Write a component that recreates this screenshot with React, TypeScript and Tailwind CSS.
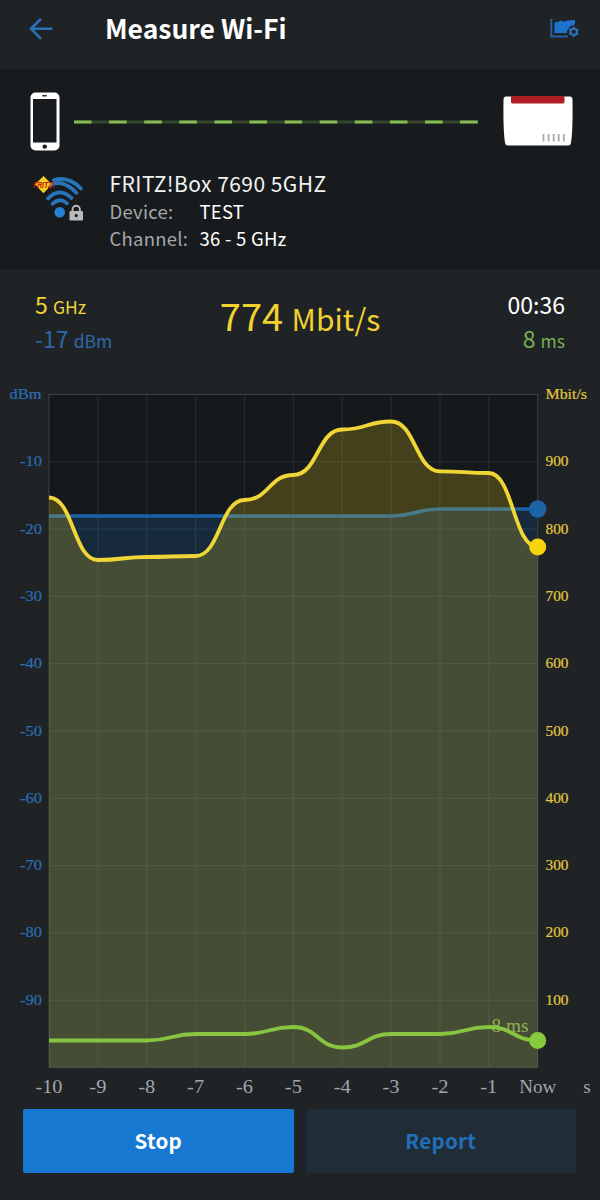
const X0 = 49;
const STEP = 48.87;
const TOP = 394.5;
const BOTTOM = 1067.5;
const ROW = 67.3;

const throughput = [497.5, 560, 557, 556, 500, 475, 429.5, 421.5, 471.3, 473, 547];
const signal = [516, 516, 516, 516, 516, 516, 516, 516, 509, 509, 509];
const latency = [1040.5, 1040.5, 1040.5, 1034, 1034, 1027, 1047.5, 1034, 1034, 1027, 1040.5];

function curve(values: number[]) {
  return values
    .map((y, i) => {
      const x = X0 + i * STEP;
      if (i === 0) return `M${x} ${y}`;
      const mid = x - STEP / 2;
      return `C${mid} ${values[i - 1]} ${mid} ${y} ${x} ${y}`;
    })
    .join(" ");
}

const area = (values: number[]) => `${curve(values)} V${BOTTOM} H${X0} Z`;

function Chart() {
  const xLabels = ["-10", "-9", "-8", "-7", "-6", "-5", "-4", "-3", "-2", "-1", "Now"];
  const right = X0 + STEP * 10;
  return (
    <svg viewBox="0 380 600 725" className="block h-[725px] w-[600px] shrink-0 font-['Liberation_Serif',serif]">
      <rect x={X0} y={TOP} width={right - X0} height={BOTTOM - TOP} fill="#16191c" />
      <g stroke="#2b2f32" strokeWidth="1">
        {Array.from({ length: 9 }, (_, i) => (
          <line key={`h${i}`} x1={X0} x2={right} y1={TOP + ROW * (i + 1)} y2={TOP + ROW * (i + 1)} />
        ))}
        {Array.from({ length: 9 }, (_, i) => (
          <line key={`v${i}`} y1={TOP} y2={BOTTOM} x1={X0 + STEP * (i + 1)} x2={X0 + STEP * (i + 1)} />
        ))}
      </g>
      <rect x={X0} y={TOP} width={right - X0} height={BOTTOM - TOP} fill="none" stroke="#3d4144" />
      <path d={area(signal)} fill="#1778d2" fillOpacity=".18" />
      <path d={curve(signal)} fill="none" stroke="#1b62a6" strokeWidth="3.6" />
      <path d={area(throughput)} fill="#f5d41a" fillOpacity=".21" />
      <path d={curve(throughput)} fill="none" stroke="#f0d537" strokeWidth="3.8" />
      <text x="491.5" y="1032" fontSize="19" textLength="37" lengthAdjust="spacingAndGlyphs" fill="#8fae55">8 ms</text>
      <path d={curve(latency)} fill="none" stroke="#87c540" strokeWidth="3.8" />
      <circle cx={right} cy="509" r="8.7" fill="#1c63a8" />
      <circle cx={right} cy="547" r="8.5" fill="#f8d40b" />
      <circle cx={right} cy="1040.5" r="8.5" fill="#85cb3d" />

      <g fontSize="15.5" fill="#2a6fb5" stroke="#2a6fb5" strokeWidth=".2">
        <text x="9.5" y="399" textLength="32" lengthAdjust="spacingAndGlyphs">dBm</text>
        {[10, 20, 30, 40, 50, 60, 70, 80, 90].map((n, i) => (
          <text key={n} x="20" y={TOP + ROW * (i + 1) + 4.5} textLength="22" lengthAdjust="spacingAndGlyphs">-{n}</text>
        ))}
      </g>
      <g fontSize="15.5" fill="#e3c73f" stroke="#e3c73f" strokeWidth=".2">
        <text x="545.5" y="399" textLength="41.5" lengthAdjust="spacingAndGlyphs">Mbit/s</text>
        {[900, 800, 700, 600, 500, 400, 300, 200, 100].map((n, i) => (
          <text key={n} x="545.5" y={TOP + ROW * (i + 1) + 4.5} textLength="23" lengthAdjust="spacingAndGlyphs">{n}</text>
        ))}
      </g>
      <g fontSize="19" fill="#a3a5a7" textAnchor="middle">
        {xLabels.map((l, i) => (
          <text
            key={l}
            x={X0 + STEP * i}
            y="1092.5"
            textLength={l === "Now" ? 37 : l === "-10" ? 27 : 17}
            lengthAdjust="spacingAndGlyphs"
          >
            {l}
          </text>
        ))}
        <text x="587" y="1092.5">s</text>
      </g>
    </svg>
  );
}

function Phone() {
  return (
    <svg viewBox="0 0 30 59" className="h-[59px] w-[30px] shrink-0">
      <rect x="0.5" y="0.5" width="29" height="58" rx="5" fill="#fff" />
      <rect x="3" y="7" width="23.5" height="43.5" fill="#171b1e" />
      <rect x="12" y="3" width="5" height="1.6" rx=".8" fill="#333" />
      <circle cx="14.8" cy="54.6" r="2.2" fill="#171b1e" />
    </svg>
  );
}

function Router() {
  return (
    <svg viewBox="0 0 70 50" className="h-[50px] w-[70px] shrink-0">
      <path d="M3 0.5H67Q69.5 .5 69.5 4Q70 34 68 47Q67.600 49.500 65 49.500H5Q2.400 49.500 2 47Q0 34 .5 4Q.5 .5 3 .5Z" fill="#fff" />
      <path d="M8 0H61.500V6Q61.500 7.500 60 7.500H9.500Q8 7.500 8 6Z" fill="#b01e26" />
      <path d="M40.500 38V45.500M45.600 38V45.500M50.700 38V45.500M55.700 38V45.500M60.800 38V45.500" stroke="#a9a9a9" strokeWidth="1.8" />
    </svg>
  );
}

function WifiBadge() {
  return (
    <svg viewBox="32 186 54 52" className="h-[52px] w-[54px] shrink-0">
      <g fill="none" stroke="#2874b8" strokeWidth="3.8" strokeLinecap="round">
        <path d="M54 193Q69 189 80.800 201.500" />
        <path d="M43 202.500Q60 188 76.300 205.800" />
        <path d="M48 211.500Q59.500 199.500 71.500 211" />
        <path d="M52.500 216.800Q60 210 67 216.300" />
      </g>
      <circle cx="59.700" cy="225.200" r="5.300" fill="#2780d4" />
      <path d="M43.500 189L52 197.600L43.500 206.300L35 197.600Z" fill="#f6cf18" />
      <text x="33" y="201.200" fontSize="9.500" textLength="21.500" lengthAdjust="spacingAndGlyphs" fill="#c8101a" className="font-['Liberation_Sans',sans-serif] font-bold italic">FRITZ!</text>
      <rect x="69.500" y="224" width="13.500" height="9.500" rx="1" fill="#b9babb" />
      <path d="M72.500 225V222.500A3.700 3.700 0 0 1 79.900 222.500V225" fill="none" stroke="#b9babb" strokeWidth="1.900" />
      <circle cx="76.200" cy="228.600" r="1.600" fill="#171b1e" />
    </svg>
  );
}

function ChartSettings() {
  return (
    <svg viewBox="550 18 30 22" className="h-[22px] w-[30px]">
      <path d="M551.300 19V36.400H568" fill="none" stroke="#2262a3" strokeWidth="2" />
      <path d="M554.500 22.500L558 22L561 20.500L564 21.800L567 20.500L575 20V24.500L570 26.500L567 31V33H554.500Z" fill="#1d73cc" />
      <circle cx="573.700" cy="31.800" r="5.600" fill="#202326" />
      <circle cx="573.700" cy="31.800" r="3.200" fill="none" stroke="#2f70b3" strokeWidth="2.200" />
      <path
        d="M573.700 26.600V29M573.700 34.600V37M569.200 29.200L571.300 30.400M576.100 33.200L578.200 34.400M569.200 34.400L571.300 33.200M576.100 30.400L578.200 29.200"
        stroke="#2f70b3"
        strokeWidth="2"
      />
    </svg>
  );
}

export default function App() {
  return (
    <div className="flex h-[1200px] w-[600px] flex-col overflow-hidden bg-[#202326] font-['Noto_Sans_CJK_SC',sans-serif] text-white">
      <header className="flex h-[69px] shrink-0 items-start pl-[29px] pr-[20px]">
        <svg viewBox="0 0 24 22" className="mt-[18px] h-[22px] w-6" fill="none" stroke="#2a72b8" strokeWidth="2.600">
          <path d="M23.500 10.800H2M12 .8L2 10.800L12 20.800" />
        </svg>
        <h1 className="ml-[52px] mt-[8px] whitespace-nowrap text-[26.500px] font-bold leading-[40px]">Measure Wi-Fi</h1>
        <div className="ml-auto mt-[18px]">
          <ChartSettings />
        </div>
      </header>

      <section className="h-[200px] shrink-0 bg-[#171b1e] px-[30px] pt-[23px]">
        <div className="flex items-start">
          <Phone />
          <svg viewBox="0 0 404 4" className="ml-[14px] mt-[27.500px] h-1 w-[404px] shrink-0">
            <path d="M0 2H404" stroke="#34472c" strokeWidth="3" />
            <path d="M0 2H404" stroke="#85bb50" strokeWidth="3.200" strokeDasharray="17.600 17.500" />
          </svg>
          <div className="-mr-[3px] ml-[25px] mt-[4px] shrink-0">
            <Router />
          </div>
        </div>
        <div className="flex items-start pl-[2px] pt-[12px]">
          <div className="pt-[10px]">
            <WifiBadge />
          </div>
          <div className="ml-[23.500px] pt-[6px]">
            <div className="whitespace-nowrap text-[21px] leading-[29px] tracking-[0.450px] text-[#f2f2f2]">FRITZ!Box 7690 5GHZ</div>
            <div className="grid grid-cols-[90px_1fr] whitespace-nowrap text-[18.500px] leading-[27px] tracking-[0.250px]">
              <span className="text-[#a5a7a9]">Device:</span>
              <span>TEST</span>
              <span className="text-[#a5a7a9]">Channel:</span>
              <span>36 - 5 GHz</span>
            </div>
          </div>
        </div>
      </section>

      <section className="flex h-[111px] shrink-0 justify-between px-[35px] pt-[18px] leading-[34px]">
        <div className="w-[110px] whitespace-nowrap text-[23px]">
          <div className="text-[#f0d537]">5 <span className="text-[17.500px] leading-none">GHz</span></div>
          <div className="text-[#2c68ab]">-17 <span className="text-[17.500px] leading-none">dBm</span></div>
        </div>
        <div className="whitespace-nowrap text-[38px] leading-[56px] text-[#f0d130]">
          774 <span className="text-[30px] leading-none">Mbit/s</span>
        </div>
        <div className="w-[110px] whitespace-nowrap text-right text-[23px]">
          <div>00:36</div>
          <div className="text-[#78b052]">8 <span className="text-[17.500px] leading-none">ms</span></div>
        </div>
      </section>

      <Chart />

      <div className="flex shrink-0 gap-3 pl-[23px] pr-[24px] pt-1 text-[20.500px] font-bold tracking-[0.300px]">
        <button className="h-[64px] flex-1 rounded-[2px] bg-[#1778d2] pb-[2px]">Stop</button>
        <button className="h-[64px] flex-1 rounded-[2px] bg-[#202c36] pb-[2px] text-[#226fb9]">Report</button>
      </div>
    </div>
  );
}
